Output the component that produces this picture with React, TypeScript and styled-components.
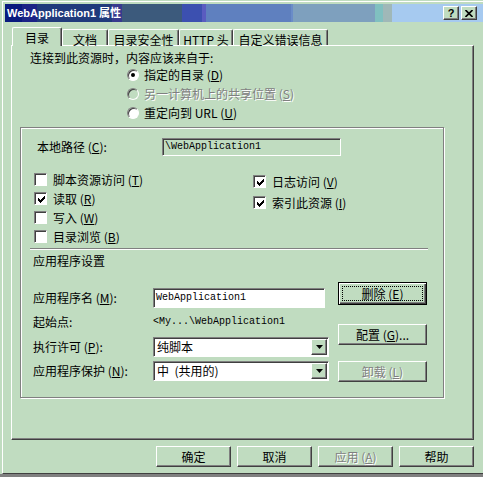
import React from "react";
import styled, { createGlobalStyle, css } from "styled-components";

const FACE = "#c0dcc0";
const SHADOW = "#808080";
const DARK = "#404040";
const LIGHT = "#ffffff";

const GlobalStyle = createGlobalStyle`
  html, body { margin: 0; padding: 0; }
  body {
    background: ${FACE};
    font-family: "Noto Sans CJK SC", "Liberation Sans", sans-serif;
    font-size: 12px;
    color: #000;
    overflow: hidden;
  }
`;

const Desk = styled.div`
  width: 483px;
  height: 477px;
  overflow: hidden;
  background: linear-gradient(to bottom, ${FACE} 474px, ${SHADOW} 474px);
`;

const Window = styled.div`
  margin: 1px 0 0 2px;
  width: 500px;
  height: 473px;
  box-sizing: border-box;
  border-left: 1px solid ${LIGHT};
  border-top: 1px solid ${LIGHT};
  border-bottom: 1px solid ${DARK};
  padding: 2px 0 0 2px;
  background: ${FACE};
`;

const TitleBar = styled.div`
  width: 478px;
  height: 18px;
  box-sizing: border-box;
  display: flex;
  align-items: center;
  padding: 0 6px 0 2px;
  background: linear-gradient(
    to right,
    #0a1a7e 0 17px,
    #1c2386 17px 32px,
    #203a7c 32px 107px,
    #383a8e 107px 117px,
    #3c5a7c 117px 177px,
    #3c50b0 177px 197px,
    #5a5cc0 197px 201px,
    #5f80bf 201px 286px,
    #6a8cc8 286px 288px,
    #7ea0be 288px 370px,
    #80c0c0 370px 378px,
    #a0b8b8 378px 387px,
    #a6caf0 387px
  );
`;

const Title = styled.span`
  color: #fff;
  font-family: "Liberation Sans", "Noto Sans CJK SC", sans-serif;
  font-weight: bold;
  font-size: 11px;
  line-height: 14px;
  white-space: pre;
`;

const CaptionButtons = styled.div`
  margin-left: auto;
  display: flex;
  gap: 2px;
`;

const CaptionButton = styled.div`
  width: 16px;
  height: 14px;
  box-sizing: border-box;
  background: ${FACE};
  border-top: 1px solid ${LIGHT};
  border-left: 1px solid ${LIGHT};
  border-right: 1px solid ${DARK};
  border-bottom: 1px solid ${DARK};
  box-shadow: inset -1px -1px 0 ${SHADOW};
  display: flex;
  align-items: center;
  justify-content: center;
  font-family: "Liberation Sans", sans-serif;
  font-weight: bold;
  font-size: 11px;
  line-height: 12px;
`;

const Body = styled.div`
  padding-left: 6px;
`;

const TabStrip = styled.div`
  margin-top: 5px;
  height: 18px;
  display: flex;
  align-items: flex-end;
  padding-left: 1px;
`;

const Tab = styled.div<{ $active?: boolean; $w: number }>`
  width: ${(p) => p.$w}px;
  height: ${(p) => (p.$active ? 19 : 16)}px;
  box-sizing: border-box;
  background: ${FACE};
  border-top: 1px solid ${LIGHT};
  border-left: 1px solid ${LIGHT};
  border-right: 1px solid ${DARK};
  border-radius: 2px 2px 0 0;
  box-shadow: inset -1px 0 0 ${SHADOW};
  padding-top: 3px;
  line-height: 14px;
  text-align: center;
  white-space: pre;
  position: relative;
  z-index: ${(p) => (p.$active ? 2 : 1)};
  margin-bottom: ${(p) => (p.$active ? -1 : 0)}px;
`;

const Panel = styled.div`
  width: 463px;
  height: 395px;
  box-sizing: border-box;
  border-top: 1px solid ${LIGHT};
  border-left: 1px solid ${LIGHT};
  border-right: 1px solid ${DARK};
  border-bottom: 1px solid ${DARK};
  box-shadow: inset -1px -1px 0 ${SHADOW};
  padding: 5px 0 0 8px;
`;

const Text = styled.div<{ $disabled?: boolean }>`
  line-height: 14px;
  white-space: pre;
  ${(p) =>
    p.$disabled &&
    css`
      color: ${SHADOW};
      text-shadow: 1px 1px 0 ${LIGHT};
    `}
`;

const Heading = styled(Text)`
  margin-left: 10px;
`;

const RadioGroup = styled.div`
  margin-left: 107px;
  display: flex;
  flex-direction: column;
`;

const RadioRow = styled.div`
  height: 19px;
  display: flex;
  align-items: center;
  gap: 5px;
`;

const RadioCircle = styled.span<{ $checked?: boolean; $disabled?: boolean }>`
  width: 12px;
  height: 12px;
  box-sizing: border-box;
  border-radius: 50%;
  background: ${(p) => (p.$disabled ? FACE : LIGHT)};
  border: 1px solid;
  border-color: ${SHADOW} ${LIGHT} ${LIGHT} ${SHADOW};
  box-shadow: inset 1px 1px 0 ${DARK};
  display: flex;
  align-items: center;
  justify-content: center;
  &::after {
    content: "";
    width: 4px;
    height: 4px;
    border-radius: 50%;
    background: #000;
    display: ${(p) => (p.$checked ? "block" : "none")};
  }
`;

const GroupBox = styled.div`
  margin-top: 5px;
  width: 424px;
  height: 271px;
  box-sizing: border-box;
  border: 1px solid ${SHADOW};
  box-shadow: 1px 1px 0 ${LIGHT}, inset 1px 1px 0 ${LIGHT};
`;

const PathRow = styled.div`
  margin-top: 10px;
  padding-left: 16px;
  display: flex;
  align-items: center;
  height: 18px;
`;

const FieldLabel = styled(Text)<{ $w: number }>`
  width: ${(p) => p.$w}px;
  flex-shrink: 0;
`;

const Field = styled.div<{ $w: number; $h: number; $white?: boolean }>`
  width: ${(p) => p.$w}px;
  height: ${(p) => p.$h}px;
  box-sizing: border-box;
  background: ${(p) => (p.$white ? LIGHT : FACE)};
  border: 1px solid;
  border-color: ${SHADOW} ${LIGHT} ${LIGHT} ${SHADOW};
  box-shadow: inset 1px 1px 0 ${DARK};
  display: flex;
  align-items: center;
  padding-left: 2px;
`;

const Mono = styled.span`
  font-family: "Liberation Mono", monospace;
  font-size: 10px;
  line-height: 12px;
  white-space: pre;
`;

const Checks = styled.div`
  margin-top: 17px;
  padding-left: 13px;
  display: flex;
`;

const CheckColumn = styled.div<{ $w?: number; $gap: number; $top?: number }>`
  width: ${(p) => (p.$w ? `${p.$w}px` : "auto")};
  margin-top: ${(p) => p.$top ?? 0}px;
  display: flex;
  flex-direction: column;
  gap: ${(p) => p.$gap}px;
`;

const CheckRow = styled.div`
  height: 13px;
  display: flex;
  align-items: center;
  gap: 6px;
`;

const CheckBox = styled.span`
  width: 13px;
  height: 13px;
  box-sizing: border-box;
  background: ${LIGHT};
  border: 1px solid;
  border-color: ${SHADOW} ${LIGHT} ${LIGHT} ${SHADOW};
  box-shadow: inset 1px 1px 0 ${DARK};
  display: flex;
  align-items: center;
  justify-content: center;
  padding: 1px 0 0 1px;
`;

const Separator = styled.div`
  margin: 5px 0 0 9px;
  width: 398px;
  border-top: 1px solid ${SHADOW};
  border-bottom: 1px solid ${LIGHT};
`;

const SectionTitle = styled(Text)`
  margin: 4px 0 0 12px;
`;

const Form = styled.div`
  margin: 14px 0 0 12px;
  display: flex;
`;

const FormRows = styled.div`
  width: 296px;
  padding-top: 5px;
  display: flex;
  flex-direction: column;
`;

const FormRow = styled.div<{ $h: number }>`
  height: ${(p) => p.$h}px;
  display: flex;
  align-items: center;
`;

const SideButtons = styled.div`
  margin-left: 9px;
  display: flex;
  flex-direction: column;
`;

const Button = styled.div<{ $w: number; $h: number; $top?: number; $primary?: boolean; $disabled?: boolean }>`
  width: ${(p) => p.$w}px;
  height: ${(p) => p.$h}px;
  margin-top: ${(p) => p.$top ?? 0}px;
  box-sizing: border-box;
  background: ${FACE};
  display: flex;
  align-items: center;
  justify-content: center;
  line-height: 14px;
  white-space: pre;
  ${(p) =>
    p.$primary
      ? css`
          border: 1px solid #000;
          box-shadow: inset 1px 1px 0 ${LIGHT}, inset -1px -1px 0 ${DARK}, inset -2px -2px 0 ${SHADOW};
          padding: 3px;
        `
      : css`
          border-top: 1px solid ${LIGHT};
          border-left: 1px solid ${LIGHT};
          border-right: 1px solid ${DARK};
          border-bottom: 1px solid ${DARK};
          box-shadow: inset -1px -1px 0 ${SHADOW};
        `}
  ${(p) =>
    p.$disabled &&
    css`
      color: ${SHADOW};
      text-shadow: 1px 1px 0 ${LIGHT};
    `}
`;

const FocusRing = styled.span`
  flex: 1;
  align-self: stretch;
  border: 1px dotted #000;
  display: flex;
  align-items: center;
  justify-content: center;
`;

const SelectBox = styled(Field)`
  padding: 0;
  justify-content: space-between;
`;

const SelectText = styled(Text)`
  padding-left: 3px;
`;

const DropButton = styled.span`
  width: 16px;
  height: 16px;
  margin-right: 1px;
  box-sizing: border-box;
  background: ${FACE};
  border-top: 1px solid ${LIGHT};
  border-left: 1px solid ${LIGHT};
  border-right: 1px solid ${DARK};
  border-bottom: 1px solid ${DARK};
  box-shadow: inset -1px -1px 0 ${SHADOW};
  display: flex;
  align-items: center;
  justify-content: center;
`;

const Footer = styled.div`
  width: 463px;
  margin-top: 6px;
  display: flex;
  justify-content: flex-end;
  gap: 6px;
`;

const Check = () => (
  <svg width="7" height="7" viewBox="0 0 7 7" shapeRendering="crispEdges">
    <polygon points="0,2 2,4 7,-1 7,2 2,7 0,5" fill="#000" />
  </svg>
);

const Arrow = () => (
  <svg width="7" height="4" viewBox="0 0 7 4">
    <polygon points="0,0 7,0 3.5,4" fill="#000" />
  </svg>
);

const Close = () => (
  <svg width="8" height="7" viewBox="0 0 8 7">
    <path d="M0.5 0 L7.5 7 M7.5 0 L0.5 7" stroke="#000" strokeWidth="1.6" />
  </svg>
);

const Acc = ({ label, k }: { label: string; k: string }) => (
  <>
    {label} (<u>{k}</u>)
  </>
);

const Select = ({ text }: { text: string }) => (
  <SelectBox $w={176} $h={20} $white>
    <SelectText>{text}</SelectText>
    <DropButton>
      <Arrow />
    </DropButton>
  </SelectBox>
);

const tabs = [
  { label: "目录", w: 50, active: true },
  { label: "文档", w: 46 },
  { label: "目录安全性", w: 71 },
  { label: "HTTP 头", w: 54 },
  { label: "自定义错误信息", w: 95 },
];

const App = () => {
  return (
    <Desk>
      <GlobalStyle />
      <Window>
        <TitleBar>
          <Title>WebApplication1 属性</Title>
          <CaptionButtons>
            <CaptionButton>?</CaptionButton>
            <CaptionButton>
              <Close />
            </CaptionButton>
          </CaptionButtons>
        </TitleBar>
        <Body>
          <TabStrip>
            {tabs.map((t) => (
              <Tab key={t.label} $w={t.w} $active={t.active}>
                {t.label}
              </Tab>
            ))}
          </TabStrip>
          <Panel>
            <Heading>连接到此资源时，内容应该来自于:</Heading>
            <RadioGroup>
              <RadioRow>
                <RadioCircle $checked />
                <Text>
                  <Acc label="指定的目录" k="D" />
                </Text>
              </RadioRow>
              <RadioRow>
                <RadioCircle $disabled />
                <Text $disabled>
                  <Acc label="另一计算机上的共享位置" k="S" />
                </Text>
              </RadioRow>
              <RadioRow>
                <RadioCircle />
                <Text>
                  <Acc label="重定向到 URL" k="U" />
                </Text>
              </RadioRow>
            </RadioGroup>
            <GroupBox>
              <PathRow>
                <FieldLabel $w={125}>
                  <Acc label="本地路径" k="C" />:
                </FieldLabel>
                <Field $w={179} $h={18}>
                  <Mono>\WebApplication1</Mono>
                </Field>
              </PathRow>
              <Checks>
                <CheckColumn $w={219} $gap={6}>
                  <CheckRow>
                    <CheckBox />
                    <Text>
                      <Acc label="脚本资源访问" k="T" />
                    </Text>
                  </CheckRow>
                  <CheckRow>
                    <CheckBox>
                      <Check />
                    </CheckBox>
                    <Text>
                      <Acc label="读取" k="R" />
                    </Text>
                  </CheckRow>
                  <CheckRow>
                    <CheckBox />
                    <Text>
                      <Acc label="写入" k="W" />
                    </Text>
                  </CheckRow>
                  <CheckRow>
                    <CheckBox />
                    <Text>
                      <Acc label="目录浏览" k="B" />
                    </Text>
                  </CheckRow>
                </CheckColumn>
                <CheckColumn $gap={8} $top={2}>
                  <CheckRow>
                    <CheckBox>
                      <Check />
                    </CheckBox>
                    <Text>
                      <Acc label="日志访问" k="V" />
                    </Text>
                  </CheckRow>
                  <CheckRow>
                    <CheckBox>
                      <Check />
                    </CheckBox>
                    <Text>
                      <Acc label="索引此资源" k="I" />
                    </Text>
                  </CheckRow>
                </CheckColumn>
              </Checks>
              <Separator />
              <SectionTitle>应用程序设置</SectionTitle>
              <Form>
                <FormRows>
                  <FormRow $h={21}>
                    <FieldLabel $w={120}>
                      <Acc label="应用程序名" k="M" />:
                    </FieldLabel>
                    <Field $w={172} $h={20} $white>
                      <Mono>WebApplication1</Mono>
                    </Field>
                  </FormRow>
                  <FormRow $h={27}>
                    <FieldLabel $w={120}>起始点:</FieldLabel>
                    <Mono>{"<My...\\WebApplication1"}</Mono>
                  </FormRow>
                  <FormRow $h={24}>
                    <FieldLabel $w={120}>
                      <Acc label="执行许可" k="P" />:
                    </FieldLabel>
                    <Select text="纯脚本" />
                  </FormRow>
                  <FormRow $h={24}>
                    <FieldLabel $w={120}>
                      <Acc label="应用程序保护" k="N" />:
                    </FieldLabel>
                    <Select text="中  (共用的)" />
                  </FormRow>
                </FormRows>
                <SideButtons>
                  <Button $w={89} $h={23} $primary>
                    <FocusRing>
                      <Acc label="删除" k="E" />
                    </FocusRing>
                  </Button>
                  <Button $w={89} $h={21} $top={19}>
                    <Acc label="配置" k="G" />
                    ...
                  </Button>
                  <Button $w={89} $h={21} $top={16} $disabled>
                    <Acc label="卸载" k="L" />
                  </Button>
                </SideButtons>
              </Form>
            </GroupBox>
          </Panel>
          <Footer>
            <Button $w={75} $h={21}>确定</Button>
            <Button $w={75} $h={21}>取消</Button>
            <Button $w={75} $h={21} $disabled>
              <Acc label="应用" k="A" />
            </Button>
            <Button $w={75} $h={21}>帮助</Button>
          </Footer>
        </Body>
      </Window>
    </Desk>
  );
};

export default App;
